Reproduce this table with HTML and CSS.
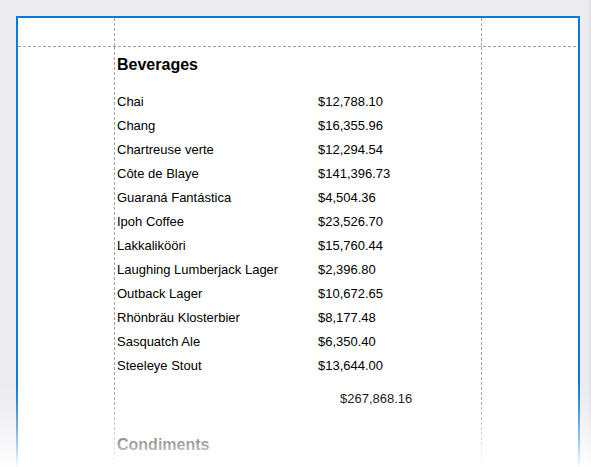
FILE: index.html
```html
<!DOCTYPE html>
<html>
<head>
<meta charset="utf-8">
<link rel="stylesheet" href="styles.css">
</head>
<body>
<div class="viewport">
  <div class="page">
    <div class="cell"></div>
    <div class="vline"></div>
    <div class="cell"></div>
    <div class="vline"></div>
    <div class="cell"></div>
    <div class="hline"></div>
    <div class="cell"></div>
    <div class="vline"></div>
    <div class="content">
      <div class="group-title">Beverages</div>
      <div class="rows">
        <div class="row"><span class="name">Chai</span><span class="value">$12,788.10</span></div>
        <div class="row"><span class="name">Chang</span><span class="value">$16,355.96</span></div>
        <div class="row"><span class="name">Chartreuse verte</span><span class="value">$12,294.54</span></div>
        <div class="row"><span class="name">Côte de Blaye</span><span class="value">$141,396.73</span></div>
        <div class="row"><span class="name">Guaraná Fantástica</span><span class="value">$4,504.36</span></div>
        <div class="row"><span class="name">Ipoh Coffee</span><span class="value">$23,526.70</span></div>
        <div class="row"><span class="name">Lakkalikööri</span><span class="value">$15,760.44</span></div>
        <div class="row"><span class="name">Laughing Lumberjack Lager</span><span class="value">$2,396.80</span></div>
        <div class="row"><span class="name">Outback Lager</span><span class="value">$10,672.65</span></div>
        <div class="row"><span class="name">Rhönbräu Klosterbier</span><span class="value">$8,177.48</span></div>
        <div class="row"><span class="name">Sasquatch Ale</span><span class="value">$6,350.40</span></div>
        <div class="row"><span class="name">Steeleye Stout</span><span class="value">$13,644.00</span></div>
      </div>
      <div class="total">$267,868.16</div>
      <div class="group-title next">Condiments</div>
    </div>
    <div class="vline"></div>
    <div class="cell"></div>
  </div>
  <div class="fade"></div>
</div>
</body>
</html>
```
FILE: styles.css
```css
html, body {
  margin: 0;
  padding: 0;
}
body {
  background: #ebebf0;
  font-family: "Liberation Sans", Arial, sans-serif;
  color: #000;
  overflow: hidden;
}
.viewport {
  position: relative;
  width: 591px;
  height: 467px;
  overflow: hidden;
  padding: 16px 0 0 16px;
  box-sizing: border-box;
  box-shadow: inset -2px 0 0 #e1e1e6;
}
.page {
  width: 564px;
  height: 520px;
  box-sizing: border-box;
  border: 2px solid #0a7bd6;
  background: #fff;
  display: grid;
  grid-template-columns: 96px 1px 366px 1px 1fr;
  grid-template-rows: 28px 1px 1fr;
}
.vline {
  background: repeating-linear-gradient(to bottom, #a3a3a3 0 3px, transparent 3px 5px);
}
.hline {
  grid-column: 1 / -1;
  background: repeating-linear-gradient(to right, #a3a3a3 0 3px, transparent 3px 5px);
}
.content {
  padding: 8px 0 0 2px;
}
.group-title {
  font-size: 16px;
  font-weight: bold;
  line-height: 20px;
  margin-bottom: 15px;
}
.group-title.next {
  margin-top: 24px;
}
.rows {
  display: flex;
  flex-direction: column;
}
.row {
  display: flex;
  font-size: 13px;
  line-height: 24px;
}
.name {
  width: 201px;
  flex: none;
}
.total {
  font-size: 13px;
  line-height: 24px;
  margin-top: 9px;
  padding-left: 223px;
}
.fade {
  position: absolute;
  left: 0;
  right: 0;
  bottom: 0;
  height: 85px;
  background: linear-gradient(to bottom, rgba(255,255,255,0) 0%, rgba(255,255,255,0.15) 25%, rgba(255,255,255,0.6) 70%, rgba(255,255,255,0.97) 100%);
  pointer-events: none;
}
```
